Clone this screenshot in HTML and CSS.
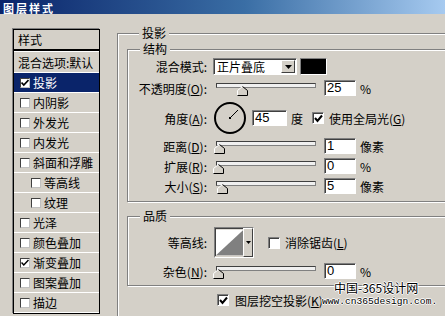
FILE: index.html
```html
<!DOCTYPE html>
<html lang="zh-CN">
<head>
    <meta charset="UTF-8">
    <meta name="viewport" content="width=device-width, initial-scale=1.0">
    <title>图层样式</title>
    <link rel="stylesheet" href="styles.css">
</head>
<body>
    <div class="dialog">
        <div class="titlebar">图层样式</div>

        <div class="content">
            <!-- left: style list -->
            <div class="style-list">
                <div class="list-head">样式</div>
                <div class="list-item">混合选项:默认</div>
                <div class="list-item selected"><span class="box"><svg width="8" height="8" viewBox="0 0 8 8"><polyline points="0.5,3.5 2.8,6 7.5,1" fill="none" stroke="#000" stroke-width="1.7"/></svg></span>投影</div>
                <div class="list-item"><span class="box"></span>内阴影</div>
                <div class="list-item"><span class="box"></span>外发光</div>
                <div class="list-item"><span class="box"></span>内发光</div>
                <div class="list-item"><span class="box"></span>斜面和浮雕</div>
                <div class="list-item sub"><span class="box"></span>等高线</div>
                <div class="list-item sub"><span class="box"></span>纹理</div>
                <div class="list-item"><span class="box"></span>光泽</div>
                <div class="list-item"><span class="box"></span>颜色叠加</div>
                <div class="list-item"><span class="box"><svg width="8" height="8" viewBox="0 0 8 8"><polyline points="0.5,3.5 2.8,6 7.5,1" fill="none" stroke="#000" stroke-width="1.5"/></svg></span>渐变叠加</div>
                <div class="list-item"><span class="box"></span>图案叠加</div>
                <div class="list-item"><span class="box"></span>描边</div>
            </div>

            <!-- right: drop shadow settings -->
            <div class="group outer">
                <div class="group-title">投影</div>

                <div class="group inner struct">
                    <div class="group-title">结构</div>

                    <div class="row row-mode">
                        <span class="lbl">混合模式:</span>
                        <div class="select">
                            <span class="select-text">正片叠底</span>
                            <span class="drop-btn"><svg width="7" height="4" viewBox="0 0 7 4"><polygon points="0,0 7,0 3.5,4" fill="#000"/></svg></span>
                        </div>
                        <div class="swatch"></div>
                    </div>

                    <div class="row row-slider first">
                        <span class="lbl">不透明度(<u>O</u>):</span>
                        <div class="slider">
                            <div class="track"></div>
                            <svg class="thumb" style="left:24px" width="11" height="10" viewBox="0 0 11 10"><polygon points="0.5,9.5 0.5,4.5 5.5,0.5 10.5,4.5 10.5,9.5" fill="#d4d0c8"/><polyline points="0.5,9.5 0.5,4.5 5.5,0.5" fill="none" stroke="#fff"/><polyline points="5.5,0.5 10.5,4.5 10.5,9.5 0.5,9.5" fill="none" stroke="#000"/></svg>
                        </div>
                        <div class="field">25</div>
                        <span class="unit">%</span>
                    </div>

                    <div class="row row-angle">
                        <span class="lbl">角度(<u>A</u>):</span>
                        <svg class="dial" width="34" height="34" viewBox="0 0 34 34">
                            <circle cx="17" cy="17" r="15" fill="none" stroke="#000" stroke-width="2"/>
                            <rect x="16" y="16" width="2" height="2" fill="#000"/>
                            <line x1="17.5" y1="16.5" x2="25" y2="9" stroke="#000" stroke-width="1"/>
                        </svg>
                        <div class="field wide">45</div>
                        <span class="unit deg">度</span>
                        <span class="check"><svg width="9" height="9" viewBox="0 0 9 9"><polyline points="1,4 3.5,7 8,1.5" fill="none" stroke="#000" stroke-width="2"/></svg></span>
                        <span class="check-text">使用全局光(<u>G</u>)</span>
                    </div>

                    <div class="row row-slider">
                        <span class="lbl">距离(<u>D</u>):</span>
                        <div class="slider">
                            <div class="track"></div>
                            <svg class="thumb" style="left:1px" width="11" height="10" viewBox="0 0 11 10"><polygon points="0.5,9.5 0.5,4.5 5.5,0.5 10.5,4.5 10.5,9.5" fill="#d4d0c8"/><polyline points="0.5,9.5 0.5,4.5 5.5,0.5" fill="none" stroke="#fff"/><polyline points="5.5,0.5 10.5,4.5 10.5,9.5 0.5,9.5" fill="none" stroke="#000"/></svg>
                        </div>
                        <div class="field">1</div>
                        <span class="unit">像素</span>
                    </div>

                    <div class="row row-slider">
                        <span class="lbl">扩展(<u>R</u>):</span>
                        <div class="slider">
                            <div class="track"></div>
                            <svg class="thumb" style="left:0px" width="11" height="10" viewBox="0 0 11 10"><polygon points="0.5,9.5 0.5,4.5 5.5,0.5 10.5,4.5 10.5,9.5" fill="#d4d0c8"/><polyline points="0.5,9.5 0.5,4.5 5.5,0.5" fill="none" stroke="#fff"/><polyline points="5.5,0.5 10.5,4.5 10.5,9.5 0.5,9.5" fill="none" stroke="#000"/></svg>
                        </div>
                        <div class="field">0</div>
                        <span class="unit">%</span>
                    </div>

                    <div class="row row-slider">
                        <span class="lbl">大小(<u>S</u>):</span>
                        <div class="slider">
                            <div class="track"></div>
                            <svg class="thumb" style="left:4px" width="11" height="10" viewBox="0 0 11 10"><polygon points="0.5,9.5 0.5,4.5 5.5,0.5 10.5,4.5 10.5,9.5" fill="#d4d0c8"/><polyline points="0.5,9.5 0.5,4.5 5.5,0.5" fill="none" stroke="#fff"/><polyline points="5.5,0.5 10.5,4.5 10.5,9.5 0.5,9.5" fill="none" stroke="#000"/></svg>
                        </div>
                        <div class="field">5</div>
                        <span class="unit">像素</span>
                    </div>
                </div>

                <div class="group inner quality">
                    <div class="group-title">品质</div>

                    <div class="row row-contour">
                        <span class="lbl">等高线:</span>
                        <div class="contour">
                            <svg class="curve" width="29" height="27" viewBox="0 0 29 27"><rect width="29" height="27" fill="#fff"/><polygon points="0,27 29,0 29,27" fill="#808080"/></svg>
                            <span class="contour-btn"><svg width="5" height="3" viewBox="0 0 5 3"><polygon points="0,0 5,0 2.5,3" fill="#000"/></svg></span>
                        </div>
                        <span class="check empty"></span>
                        <span class="check-text">消除锯齿(<u>L</u>)</span>
                    </div>

                    <div class="row row-slider">
                        <span class="lbl">杂色(<u>N</u>):</span>
                        <div class="slider">
                            <div class="track"></div>
                            <svg class="thumb" style="left:0px" width="11" height="10" viewBox="0 0 11 10"><polygon points="0.5,9.5 0.5,4.5 5.5,0.5 10.5,4.5 10.5,9.5" fill="#d4d0c8"/><polyline points="0.5,9.5 0.5,4.5 5.5,0.5" fill="none" stroke="#fff"/><polyline points="5.5,0.5 10.5,4.5 10.5,9.5 0.5,9.5" fill="none" stroke="#000"/></svg>
                        </div>
                        <div class="field">0</div>
                        <span class="unit">%</span>
                    </div>
                </div>

                <div class="row knockout">
                    <span class="check"><svg width="9" height="9" viewBox="0 0 9 9"><polyline points="1,4 3.5,7 8,1.5" fill="none" stroke="#000" stroke-width="2"/></svg></span>
                    <span class="check-text">图层挖空投影(<u>K</u>)</span>
                </div>
            </div>
        </div>

        <div class="watermark">
            <div class="wm-cn">中国-365设计网</div>
            <div class="wm-url">www.cn365design.com.</div>
        </div>
    </div>
</body>
</html>
```

FILE: styles.css
```css
body {
    margin: 0;
    background: #d4d0c8;
    font-family: "Noto Sans CJK SC", "Liberation Sans", sans-serif;
    font-size: 12px;
    color: #000;
}
.dialog {
    position: relative;
    width: 445px;
    height: 316px;
    overflow: hidden;
    background: #d4d0c8;
}
.titlebar {
    height: 14px;
    line-height: 16px;
    padding-left: 3px;
    color: #fff;
    font-weight: bold;
    font-size: 11px;
    letter-spacing: 2px;
    background: linear-gradient(to right, #0a246a, #3a6ea5 55%, #a6caf0);
}
.content {
    display: flex;
    align-items: flex-start;
}

/* style list */
.style-list {
    margin: 15px 0 0 13px;
    width: 85px;
    border: 1px solid #000;
    box-shadow: -1px -1px 0 #808080;
    flex-shrink: 0;
}
.list-head {
    height: 19px;
    line-height: 19px;
    padding-left: 4px;
    border-bottom: 2px solid #000;
    box-shadow: 0 1px 0 #fff;
    margin-bottom: 2px;
}
.list-item {
    height: 19px;
    line-height: 19px;
    padding-left: 4px;
    border-bottom: 1px solid #fff;
    display: flex;
    align-items: center;
    white-space: nowrap;
}
.list-item .box {
    width: 8px;
    height: 8px;
    margin: 0 3px 0 2px;
    background: #fff;
    border: 1px solid;
    border-color: #404040 #c0c0c0 #c0c0c0 #404040;
    display: flex;
    align-items: center;
    justify-content: center;
}
.list-item.sub {
    padding-left: 15px;
}
.list-item.selected {
    background: #0a246a;
    color: #fff;
}

/* group boxes */
.group {
    border: 1px solid #808080;
    box-shadow: inset 1px 1px 0 #fff, 1px 1px 0 #fff;
}
.group-title {
    width: max-content;
    margin: -8px 0 0 12px;
    padding: 0 3px;
    height: 14px;
    line-height: 14px;
    background: #d4d0c8;
}
.group.outer {
    margin: 19px 0 0 17px;
    width: 400px;
    height: 320px;
    padding-left: 9px;
    flex-shrink: 0;
}
.group.inner {
    width: 380px;
}
.group.struct {
    margin-top: 9px;
    padding-bottom: 7px;
}
.group.quality {
    margin-top: 14px;
    padding-bottom: 6px;
}
.group.inner .group-title {
    margin-left: 12px;
}

/* rows */
.row {
    display: flex;
    align-items: center;
    white-space: nowrap;
}
.lbl {
    width: 79px;
    text-align: right;
    flex-shrink: 0;
}
.row-mode {
    margin-top: 2px;
    height: 17px;
}
.row-slider {
    height: 16px;
    margin-top: 4px;
}
.row-slider.first {
    margin-top: 5px;
}
.row-angle {
    height: 34px;
    margin-top: 5px;
}
.row-angle + .row-slider {
    margin-top: 3px;
}

.select {
    margin-left: 6px;
    width: 82px;
    height: 15px;
    background: #fff;
    border: 1px solid;
    border-color: #808080 #fff #fff #808080;
    box-shadow: inset 1px 1px 0 #404040;
    display: flex;
    align-items: center;
    justify-content: space-between;
}
.select-text {
    padding-left: 3px;
    line-height: 14px;
}
.drop-btn {
    width: 14px;
    height: 13px;
    margin-right: 1px;
    background: #d4d0c8;
    border: 1px solid;
    border-color: #fff #404040 #404040 #fff;
    box-sizing: border-box;
    display: flex;
    align-items: center;
    justify-content: center;
}
.swatch {
    margin-left: 3px;
    width: 25px;
    height: 15px;
    background: #000;
    border: 1px solid;
    border-color: #808080 #fff #fff #808080;
}

.slider {
    position: relative;
    margin-left: 6px;
    width: 106px;
    height: 16px;
    flex-shrink: 0;
}
.track {
    margin: 3px 0 0 3px;
    width: 98px;
    height: 3px;
    border: 1px solid;
    border-color: #404040 #808080 #808080 #404040;
    background: #f0f0f0;
}
.thumb {
    position: absolute;
    top: 6px;
}
.field {
    margin-left: 5px;
    width: 28px;
    height: 14px;
    line-height: 14px;
    padding-left: 2px;
    background: #fff;
    border: 1px solid;
    border-color: #808080 #fff #fff #808080;
    box-shadow: inset 1px 1px 0 #404040;
    font-family: "Liberation Sans", sans-serif;
    font-size: 13px;
}
.field.wide {
    width: 31px;
}
.unit {
    margin-left: 4px;
}
.dial {
    margin-left: 6px;
}
.deg {
    margin-left: 4px;
}
.check {
    width: 10px;
    height: 10px;
    background: #fff;
    border: 1px solid;
    border-color: #808080 #fff #fff #808080;
    box-shadow: inset 1px 1px 0 #404040;
    display: flex;
    align-items: center;
    justify-content: center;
    flex-shrink: 0;
}
.row-angle .check {
    margin-left: 9px;
}
.check-text {
    margin-left: 5px;
}

.row-contour {
    margin-top: 4px;
    height: 31px;
}
.row-contour + .row-slider {
    margin-top: 5px;
}
.contour {
    margin-left: 7px;
    width: 38px;
    height: 29px;
    border: 1px solid;
    border-color: #808080 #fff #fff #808080;
    display: flex;
}
.curve {
    display: block;
    border-top: 1px solid #404040;
    border-left: 1px solid #404040;
}
.contour-btn {
    width: 8px;
    background: #d4d0c8;
    border: 1px solid;
    border-color: #fff #404040 #404040 #fff;
    display: flex;
    align-items: center;
    justify-content: center;
}
.row-contour .check {
    margin-left: 14px;
}
.knockout {
    margin: 8px 0 0 90px;
    height: 12px;
}
.knockout .check-text {
    margin-left: 6px;
}

/* site watermark over the dialog */
.watermark {
    position: absolute;
    left: 322px;
    top: 281px;
    color: #000;
    text-shadow: 1px 0 #fff, -1px 0 #fff, 0 1px #fff, 0 -1px #fff;
}
.wm-cn {
    margin-left: 12px;
    line-height: 14px;
}
.wm-url {
    font-family: "Liberation Mono", monospace;
    font-size: 9.6px;
    line-height: 12px;
    margin-top: 1px;
}
```
